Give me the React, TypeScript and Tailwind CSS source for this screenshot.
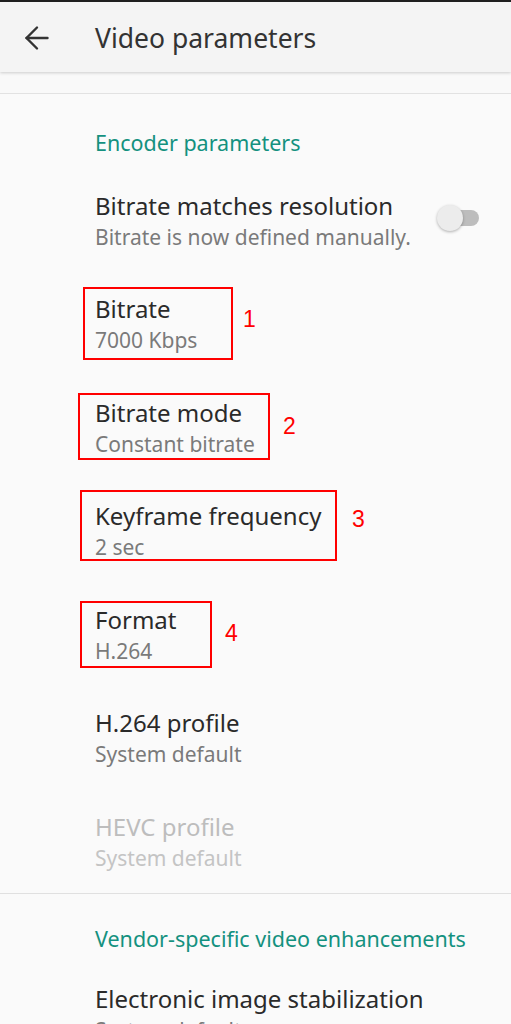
import { ArrowLeft } from "lucide-react";

type Item = {
  title: string;
  summary: string;
  disabled?: boolean;
  mark?: { n: string; box: string; num: string };
};

const items: Item[] = [
  { title: "Bitrate", summary: "7000 Kbps", mark: { n: "1", box: "left-[-12px] top-[-7px] w-[150px] h-[73px]", num: "left-[148px] top-[14px]" } },
  { title: "Bitrate mode", summary: "Constant bitrate", mark: { n: "2", box: "left-[-17px] top-[-5px] w-[192px] h-[67px]", num: "left-[188px] top-[17px]" } },
  { title: "Keyframe frequency", summary: "2 sec", mark: { n: "3", box: "left-[-15px] top-[-11px] w-[257px] h-[71px]", num: "left-[257px] top-[7px]" } },
  { title: "Format", summary: "H.264", mark: { n: "4", box: "left-[-15px] top-[-4px] w-[132px] h-[67px]", num: "left-[130px] top-[17px]" } },
  { title: "H.264 profile", summary: "System default" },
  { title: "HEVC profile", summary: "System default", disabled: true },
];

function Pref({ item }: { item: Item }) {
  return (
    <div className="h-[103.5px] pl-[95px] pr-6 flex flex-col justify-center">
      <div className="relative w-fit">
        <div className={`text-[24px] leading-[30px] ${item.disabled ? "text-[#bdbdbd]" : "text-[#2a2a2a]"}`}>{item.title}</div>
        <div className={`text-[21px] leading-[32px] ${item.disabled ? "text-[#c4c4c4]" : "text-[#7a7a7a]"}`}>{item.summary}</div>
        {item.mark && (
          <>
            <div className={`absolute border-2 border-[#ff0000] ${item.mark.box}`} />
            <div className={`absolute text-[#ff0000] text-[23px] leading-none font-['Liberation_Sans',sans-serif] ${item.mark.num}`}>{item.mark.n}</div>
          </>
        )}
      </div>
    </div>
  );
}

export default function App() {
  return (
    <div className="w-[511px] h-[1024px] overflow-hidden bg-[#fafafa] font-['Noto_Sans',sans-serif]">
      <div className="h-[2px] bg-[#202020]" />
      <header className="h-[70px] bg-[#f4f4f4] flex items-center shadow-[0_1px_3px_rgba(0,0,0,0.18)] relative">
        <ArrowLeft className="ml-[19px] mt-[2px] w-9 h-9 text-[#333]" strokeWidth={1.6} />
        <h1 className="ml-[40px] mt-[4px] text-[26.5px] text-[#333]">Video parameters</h1>
      </header>
      <div className="h-[22px] bg-[#f9f9f9] border-b border-[#e2e2e2]" />

      <div className="h-[76px] pl-[95px] pt-[37px] text-[21.5px] leading-[24px] text-[#14917f]">Encoder parameters</div>

      <div className="h-[103.5px] pl-[95px] pr-[30px] flex items-center">
        <div className="flex-1">
          <div className="text-[24px] leading-[30px] text-[#2a2a2a]">Bitrate matches resolution</div>
          <div className="text-[21px] leading-[32px] text-[#7a7a7a]">Bitrate is now defined manually.</div>
        </div>
        <div className="relative w-[44px] h-[28px] flex items-center mt-[-7px]">
          <div className="ml-[6px] w-[36px] h-[16px] rounded-full bg-[#bdbdbd]" />
          <div className="absolute left-0 top-[1px] w-[26px] h-[26px] rounded-full bg-[#ececec] shadow-[0_1px_3px_rgba(0,0,0,0.3)]" />
        </div>
      </div>

      {items.map((it) => (
        <Pref key={it.title} item={it} />
      ))}

      <div className="border-t border-[#e0e0e0] mt-[-2px]" />
      <div className="h-[76px] pl-[95px] pt-[33px] text-[21.5px] leading-[24px] text-[#14917f]">Vendor-specific video enhancements</div>
      <div className="pl-[95px] pt-[14px]">
        <div className="text-[24px] leading-[30px] text-[#2a2a2a]">Electronic image stabilization</div>
        <div className="text-[21px] leading-[32px] text-[#7a7a7a]">System default</div>
      </div>
    </div>
  );
}
